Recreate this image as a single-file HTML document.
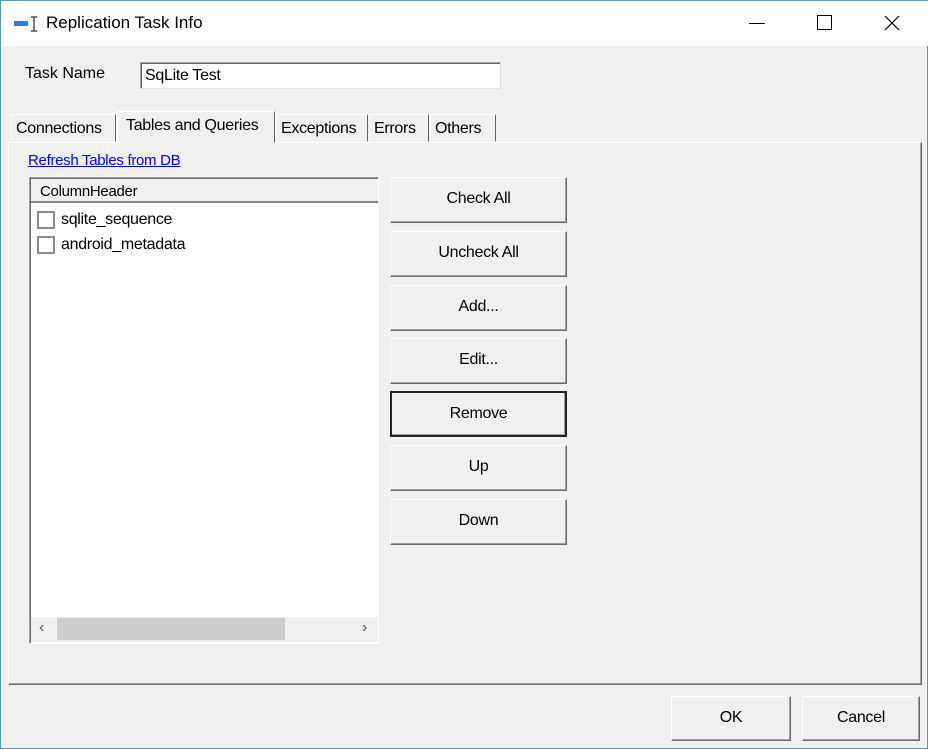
<!DOCTYPE html>
<html><head><style>
*{box-sizing:border-box;margin:0;padding:0}
body{width:928px;height:749px;background:#f0f0f0;font-family:"Liberation Sans",sans-serif;font-size:16px;color:#000;position:relative;overflow:hidden;border:1px solid #5a9ab8;border-top:none}
.a{position:absolute}
.title{left:0;top:0;width:928px;height:46px;background:#fff;border-top:1px solid #5a9ab8}
.btn{position:absolute;background:#f0f0f0;border:1px solid;border-color:#fff #696969 #696969 #fff;box-shadow:inset -1px -1px 0 #a0a0a0;text-align:center;font-size:16px;letter-spacing:-0.3px}
.tab{position:absolute;top:114px;height:28px;border:1px solid;border-color:#fff #696969 transparent #fff;padding:5px 4px 0;font-size:16px;letter-spacing:-0.3px;white-space:nowrap}
.cb{position:absolute;left:36px;width:18px;height:18px;border:2px solid #8a8a8a;background:#fff}
</style></head><body>
<div class="a title">
 <svg class="a" style="left:12px;top:14px" width="26" height="18"><rect x="1" y="6" width="14" height="5" fill="#2b7de0"/><path d="M18 2h6M21 2v14M18 16h6" stroke="#555" stroke-width="1.5" fill="none"/></svg>
 <div class="a" style="left:45px;top:12px;font-size:17px">Replication Task Info</div>
 <div class="a" style="left:748px;top:22px;width:16px;height:1px;background:#000"></div>
 <div class="a" style="left:816px;top:14px;width:15px;height:15px;border:1px solid #000"></div>
 <svg class="a" style="left:883px;top:14px" width="16" height="16"><path d="M1 1L15 15M15 1L1 15" stroke="#000" stroke-width="1.2"/></svg>
</div>
<div class="a" style="left:24px;top:65px">Task Name</div>
<div class="a" style="left:139px;top:62px;width:361px;height:27px;background:#fff;border:1px solid;border-color:#a0a0a0 #e3e3e3 #e3e3e3 #a0a0a0;box-shadow:inset 1px 1px 0 #696969;padding:4px 4px;letter-spacing:-0.3px">SqLite Test</div>

<div class="a" style="left:7px;top:142px;width:914px;height:543px;border:1px solid;border-color:#fff #696969 #696969 #fff;box-shadow:inset -1px -1px 0 #a0a0a0"></div>
<div class="tab" style="left:10px;width:105px">Connections</div>
<div class="tab" style="left:116px;top:111px;height:32px;width:158px;background:#f0f0f0;padding-left:8px">Tables and Queries</div>
<div class="tab" style="left:275px;width:92px">Exceptions</div>
<div class="tab" style="left:368px;width:60px">Errors</div>
<div class="tab" style="left:429px;width:66px">Others</div>

<div class="a" style="left:27px;top:152px;color:#0000ff;text-decoration:underline;font-size:15px;letter-spacing:-0.3px">Refresh Tables from DB</div>

<div class="a" style="left:28px;top:177px;width:350px;height:467px;background:#fff;border:1px solid;border-color:#a0a0a0 #fff #fff #a0a0a0;box-shadow:inset 1px 1px 0 #696969">
 <div class="a" style="left:1px;top:1px;width:347px;height:24px;background:#f0f0f0;border-bottom:2px solid #888;padding:4px 9px;font-size:15px;letter-spacing:-0.3px">ColumnHeader</div>
 <div class="a" style="left:1px;top:439px;width:347px;height:25px;background:#f0f0f0">
  <div class="a" style="left:26px;top:1px;width:228px;height:22px;background:#cdcdcd"></div>
  <div class="a" style="left:8px;top:2px;font-size:16px;color:#555">‹</div>
  <div class="a" style="left:331px;top:2px;font-size:16px;color:#555">›</div>
 </div>
</div>
<div class="cb" style="top:211px"></div><div class="a" style="left:60px;top:211px;letter-spacing:-0.3px">sqlite_sequence</div>
<div class="cb" style="top:236px"></div><div class="a" style="left:60px;top:236px;letter-spacing:-0.3px">android_metadata</div>

<div class="btn" style="left:389px;top:177px;width:177px;height:46px;line-height:42px">Check All</div>
<div class="btn" style="left:389px;top:231px;width:177px;height:46px;line-height:42px">Uncheck All</div>
<div class="btn" style="left:389px;top:285px;width:177px;height:46px;line-height:42px">Add...</div>
<div class="btn" style="left:389px;top:338px;width:177px;height:46px;line-height:42px">Edit...</div>
<div class="btn" style="left:389px;top:391px;width:177px;height:46px;line-height:42px;border:2px solid #222">Remove</div>
<div class="btn" style="left:389px;top:445px;width:177px;height:46px;line-height:42px">Up</div>
<div class="btn" style="left:389px;top:499px;width:177px;height:46px;line-height:42px">Down</div>

<div class="btn" style="left:670px;top:696px;width:120px;height:45px;line-height:42px">OK</div>
<div class="btn" style="left:801px;top:696px;width:118px;height:45px;line-height:42px">Cancel</div>
</body></html>
